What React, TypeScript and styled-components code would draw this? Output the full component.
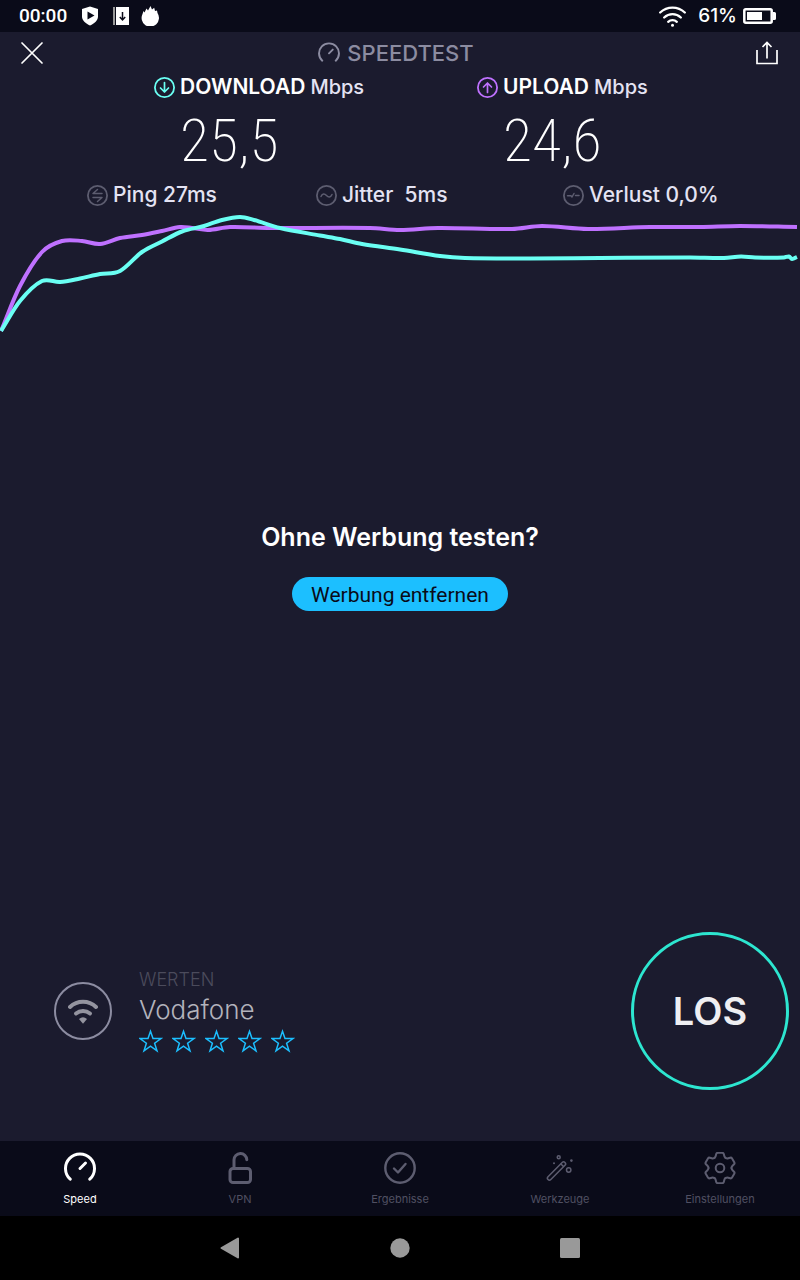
import React from "react";
import styled, { createGlobalStyle } from "styled-components";

const colors = {
  page: "#1b1b2e",
  bar: "#0a0b19",
  white: "#ffffff",
  soft: "#e4e3f3",
  muted: "#8c8ca1",
  dim: "#5d5d70",
  cyan: "#6afff3",
  purple: "#bf71ff",
  blue: "#1cbfff",
  ring: "#2de6d0",
};

const GlobalStyle = createGlobalStyle`
  *, *::before, *::after { box-sizing: border-box; }
  body {
    margin: 0;
    background: ${colors.page};
    color: ${colors.white};
    font-family: Inter, "Liberation Sans", sans-serif;
  }
  button { font: inherit; color: inherit; background: none; border: 0; padding: 0; cursor: pointer; }
  a { color: inherit; text-decoration: none; }
  svg { display: block; flex: none; }
  h1, h2, p, dl, dt, dd { margin: 0; font: inherit; }
`;

const Screen = styled.div`
  min-height: 100vh;
  display: flex;
  flex-direction: column;
`;

const StatusBar = styled.div`
  height: 32px;
  padding: 0 24px 0 19px;
  display: flex;
  align-items: center;
  justify-content: space-between;
  background: ${colors.bar};
`;

const StatusGroup = styled.div<{ $gap: number }>`
  display: flex;
  align-items: center;
  gap: ${(p) => p.$gap}px;
`;

const Clock = styled.span`
  font: 500 19px/32px Roboto, sans-serif;
`;

const BatteryLevel = styled.span`
  font-size: 19px;
  font-weight: 500;
  line-height: 32px;
  margin-left: 6px;
`;

const Header = styled.header`
  height: 42px;
  padding: 0 20px;
  display: flex;
  align-items: center;
  justify-content: space-between;
`;

const Brand = styled.h1`
  display: flex;
  align-items: center;
  gap: 7px;
  padding-right: 6px;
  color: ${colors.muted};
  font-size: 22px;
  font-weight: 500;
`;

const Main = styled.main`
  flex: 1;
  display: flex;
  flex-direction: column;
`;

const Results = styled.dl`
  display: grid;
  grid-template-columns: 1fr 1fr;
  padding-left: 154px;
`;

const ResultLabel = styled.dt`
  display: flex;
  align-items: center;
  gap: 5px;
  font-size: 21px;
  font-weight: 600;
  line-height: 26px;
`;

const Unit = styled.span`
  color: ${colors.soft};
  font-size: 20px;
  font-weight: 500;
`;

const ResultValue = styled.dd`
  padding-left: 26px;
  font-family: "Roboto Condensed", Roboto, sans-serif;
  font-size: 60px;
  font-weight: 200;
  line-height: 82px;
`;

const Stats = styled.ul`
  display: grid;
  grid-template-columns: 229fr 247fr 237fr;
  margin: 0;
  padding: 0 0 0 87px;
  list-style: none;
`;

const Stat = styled.li`
  display: flex;
  align-items: center;
  gap: 5px;
  color: ${colors.soft};
  font-size: 21px;
  font-weight: 500;
  line-height: 26px;
  white-space: pre;

  svg { color: ${colors.dim}; }
`;

const Chart = styled.svg`
  width: 100%;
  height: 132px;
`;

const Promo = styled.section`
  display: flex;
  flex-direction: column;
  align-items: center;
  gap: 24px;
  padding-top: 181px;
`;

const PromoTitle = styled.h2`
  font-size: 25px;
  font-weight: 600;
  line-height: 32px;
`;

const PromoButton = styled.button`
  height: 34px;
  padding: 2px 19px 0;
  border-radius: 17px;
  background: ${colors.blue};
  color: ${colors.bar};
  font: 400 21px/32px Roboto, sans-serif;
`;

const ServerRow = styled.section`
  margin-top: auto;
  padding: 0 11px 51px 54px;
  display: flex;
  align-items: center;
`;

const NetworkBadge = styled.div`
  width: 58px;
  height: 58px;
  border: 2px solid ${colors.muted};
  border-radius: 50%;
  display: grid;
  place-items: center;
  color: #94949f;
`;

const Provider = styled.div`
  flex: 1;
  padding-left: 27px;
`;

const RateLabel = styled.p`
  color: #4b4b5c;
  font-size: 18px;
  font-weight: 300;
  line-height: 22px;
`;

const ProviderName = styled.p`
  color: #b3b3bc;
  font-size: 26px;
  font-weight: 300;
  line-height: 38px;
`;

const Stars = styled.div`
  display: flex;
  gap: 9px;
  height: 24px;
  align-items: center;
  color: ${colors.blue};
`;

const StartButton = styled.button`
  width: 158px;
  height: 158px;
  border: 3px solid ${colors.ring};
  border-radius: 50%;
  color: #efeff2;
  font-size: 38px;
  font-weight: 600;
`;

const TabBar = styled.nav`
  display: grid;
  grid-template-columns: repeat(5, 1fr);
  height: 75px;
  padding-top: 11px;
  background: ${colors.bar};
`;

const Tab = styled.a<{ $active?: boolean }>`
  display: flex;
  flex-direction: column;
  align-items: center;
  gap: 7px;
  color: ${(p) => (p.$active ? colors.white : colors.dim)};
  font-size: 11px;
  line-height: 16px;
`;

const TabLabel = styled.span<{ $active?: boolean }>`
  color: ${(p) => (p.$active ? colors.white : "#505062")};
`;

const SystemNav = styled.div`
  height: 64px;
  display: flex;
  align-items: center;
  justify-content: center;
  gap: 130px;
  background: #000;
  color: #999;
`;

const SystemButton = styled.button`
  width: 40px;
  height: 40px;
  display: grid;
  place-items: center;
`;

const line = {
  fill: "none",
  stroke: "currentColor",
  strokeLinecap: "round" as const,
  strokeLinejoin: "round" as const,
};

const Gauge = ({ size, weight }: { size: number; weight: number }) => (
  <svg width={size} height={size} viewBox="0 0 32 32" {...line} strokeWidth={weight}>
    <path d="M6.2 27.2A14.5 14.5 0 1 1 25.8 27.2" />
    <path d="M16 16.5L21.5 11" />
  </svg>
);

const CircleIcon = ({ color, children, weight = 1.7 }: { color?: string; children: React.ReactNode; weight?: number }) => (
  <svg width="21" height="21" viewBox="0 0 21 21" {...line} stroke={color || "currentColor"} strokeWidth={weight}>
    <circle cx="10.5" cy="10.5" r="9.6" strokeWidth="1.8" />
    {children}
  </svg>
);

type Point = [number, number];

const uploadPoints: Point[] = [
  [1, 331], [20, 286], [42, 252], [62, 241], [82, 241], [100, 244], [120, 238], [142, 235],
  [162, 231], [180, 227], [192, 228], [208, 230], [230, 227], [270, 228], [370, 228],
  [400, 230], [438, 228], [512, 229], [542, 226], [588, 229], [650, 227], [700, 227],
  [740, 226], [797, 227],
];

const downloadPoints: Point[] = [
  [1, 331], [20, 301], [42, 281], [60, 282], [80, 278.5], [100, 274], [120, 271], [142, 252],
  [162, 241.5], [182, 231.5], [204, 226], [222, 220], [240, 217], [254, 220], [280, 228],
  [320, 235.5], [340, 239], [362, 244], [400, 249.5], [440, 256], [465, 258], [530, 258.5],
  [600, 258], [690, 257.5], [724, 258], [741, 256.5], [755, 257.5], [784, 257.5],
  [789, 256.5], [792, 259], [797, 257],
];

/* Smooth curve through the samples, with tangents taken from the neighbours. */
function smooth(points: Point[]): string {
  const last = points.length - 1;
  const slope = (i: number) => {
    const a = points[Math.max(0, i - 1)];
    const b = points[Math.min(last, i + 1)];
    return (b[1] - a[1]) / (b[0] - a[0]);
  };
  let d = `M${points[0][0]} ${points[0][1]}`;
  for (let i = 0; i < last; i++) {
    const [x0, y0] = points[i];
    const [x1, y1] = points[i + 1];
    const step = (x1 - x0) / 3;
    d += `C${x0 + step} ${y0 + slope(i) * step} ${x1 - step} ${y1 - slope(i + 1) * step} ${x1} ${y1}`;
  }
  return d;
}

const tooth =
  "M-5.75 -9.96C-4.9 -10.5 -4.5 -11.2 -4.3 -12L-3.8 -14Q-3.5 -15.2 -2.2 -15.2L2.2 -15.2Q3.5 -15.2 3.8 -14L4.3 -12C4.5 -11.2 4.9 -10.5 5.75 -9.96";

const Gear = () => (
  <svg width="32" height="32" viewBox="-16 -16 32 32" {...line} strokeWidth="2">
    {[0, 60, 120, 180, 240, 300].map((angle) => (
      <path key={angle} d={tooth} transform={`rotate(${angle})`} />
    ))}
    <circle r="4.3" />
  </svg>
);

const Lock = () => (
  <svg width="32" height="32" viewBox="0 0 32 32" {...line} strokeWidth="3">
    <rect x="6" y="16.5" width="20.5" height="14" rx="3" />
    <path d="M10 16V8a6.300 6.300 0 0 1 12.800 -.2" />
  </svg>
);

const Check = () => (
  <svg width="32" height="32" viewBox="0 0 32 32" {...line} strokeWidth="2.4">
    <circle cx="16" cy="16" r="14.7" />
    <path d="M10 16.5l4 4 7.5-8.5" />
  </svg>
);

const Wand = () => (
  <svg width="32" height="32" viewBox="0 0 32 32" {...line} strokeWidth="1.5">
    <rect x="-2" y="-12" width="4" height="24" rx="2" transform="translate(12.5 19) rotate(45)" />
    <path d="M17 12l2.500 2.500" />
    <circle cx="14.7" cy="5.2" r="1.5" />
    <circle cx="24.7" cy="18" r="2.2" />
    <circle cx="27.4" cy="8.6" r="1.3" fill="currentColor" stroke="none" />
    <circle cx="10" cy="11.2" r="1" fill="currentColor" stroke="none" />
  </svg>
);

const tabs = [
  { label: "Speed", icon: <Gauge size={32} weight={3} />, active: true },
  { label: "VPN", icon: <Lock /> },
  { label: "Ergebnisse", icon: <Check /> },
  { label: "Werkzeuge", icon: <Wand /> },
  { label: "Einstellungen", icon: <Gear /> },
];

export default function App() {
  return (
    <>
      <GlobalStyle />
      <Screen>
        <StatusBar>
          <StatusGroup $gap={12}>
            <Clock>00:00</Clock>
            <svg width="22" height="20" viewBox="0 0 22 20">
              <path d="M11 0.5L19 3v7.5c0 4-3.5 7-8 9-4.5-2-8-5-8-9V3z" fill="#fff" />
              <path d="M8.5 5.5v8l7-4z" fill={colors.bar} />
            </svg>
            <svg width="16" height="18" viewBox="0 0 16 18">
              <path d="M0 0h2v18H0z" fill="#999" />
              <path d="M3 0h13v18H3z" fill="#fff" />
              <path d="M9.5 5v7M6.8 10l2.7 3 2.7-3" fill="none" stroke={colors.bar} strokeWidth="1.5" />
            </svg>
            <svg width="19" height="20" viewBox="0 0 19 20">
              <path d="M2.5 5L3.5 6.5 5.5 2.5 7 4.5 9.5 0 11 3.5 13.2 1.8 14 5 16 4.5 16.5 7A8.7 8.7 0 1 1 1.5 8z" fill="#fff" />
            </svg>
          </StatusGroup>
          <StatusGroup $gap={6}>
            <svg width="27" height="21" viewBox="0 0 27 21" {...line} strokeWidth="2.3">
              <path d="M1.2 6.5a18 18 0 0 1 24.6 0M5.2 11.5a12 12 0 0 1 16.6 0M9.2 15.8a6.3 6.3 0 0 1 8.6 0" />
              <circle cx="13.5" cy="19.2" r="1.5" fill="currentColor" stroke="none" />
            </svg>
            <BatteryLevel>61%</BatteryLevel>
            <svg width="33" height="16" viewBox="0 0 33 16">
              <rect x="1.3" y="1.3" width="27.4" height="13.4" rx="1.5" fill="none" stroke="#fff" strokeWidth="2.5" />
              <path d="M4 4h15v8H4zM30 4h1.5q1.5 0 1.5 1.5v5q0 1.5-1.5 1.5H30z" fill="#fff" />
            </svg>
          </StatusGroup>
        </StatusBar>

        <Header>
          <button aria-label="Schließen">
            <svg width="24" height="24" viewBox="0 0 24 24" {...line} strokeWidth="1.7">
              <path d="M2 2l20 20M22 2L2 22" />
            </svg>
          </button>
          <Brand>
            <Gauge size={22} weight={2.8} />
            SPEEDTEST
          </Brand>
          <button aria-label="Teilen">
            <svg width="26" height="24" viewBox="0 0 26 24" {...line} strokeLinecap="butt" strokeLinejoin="miter" strokeWidth="1.7">
              <path d="M3 9v13.5h20V9M13 17.5V2M8.5 6L13 1.5 17.5 6" />
            </svg>
          </button>
        </Header>

        <Main>
          <Results>
            <div>
              <ResultLabel>
                <CircleIcon color={colors.cyan}>
                  <path d="M10.5 5.5v9.500M6.5 11l4 4 4-4" />
                </CircleIcon>
                <span>DOWNLOAD</span>
                <Unit>Mbps</Unit>
              </ResultLabel>
              <ResultValue>25,5</ResultValue>
            </div>
            <div>
              <ResultLabel>
                <CircleIcon color={colors.purple}>
                  <path d="M10.5 15.5V6M6.5 10l4-4 4 4" />
                </CircleIcon>
                <span>UPLOAD</span>
                <Unit>Mbps</Unit>
              </ResultLabel>
              <ResultValue>24,6</ResultValue>
            </div>
          </Results>

          <Stats>
            <Stat>
              <CircleIcon weight={1.5}>
                <path d="M15 8.500H6l4.500-4M6 12.500h9l-4.500 4" />
              </CircleIcon>
              Ping 27ms
            </Stat>
            <Stat>
              <CircleIcon weight={1.5}>
                <path d="M5 11.500c1.500-3.500 3.700-3 5.500-1s4 2.500 5.500-1" />
              </CircleIcon>
              {"Jitter  5ms"}
            </Stat>
            <Stat>
              <CircleIcon weight={1.5}>
                <path d="M4.500 10.800h3.500l1 1.200 2-3.500M12.500 10.500h3.500" />
              </CircleIcon>
              Verlust 0,0%
            </Stat>
          </Stats>

          <Chart viewBox="0 208 800 132" preserveAspectRatio="none" fill="none" strokeWidth="4" role="img" aria-label="Verlauf">
            <path d={smooth(uploadPoints)} stroke={colors.purple} />
            <path d={smooth(downloadPoints)} stroke={colors.cyan} />
          </Chart>

          <Promo>
            <PromoTitle>Ohne Werbung testen?</PromoTitle>
            <PromoButton>Werbung entfernen</PromoButton>
          </Promo>

          <ServerRow>
            <NetworkBadge>
              <svg width="30" height="25" viewBox="0 0 30 25" {...line} strokeWidth="4">
                <path d="M2 8a19 19 0 0 1 26 0" />
                <path d="M8 14.5a11 11 0 0 1 14 0" />
                <path d="M11 20q4-3.5 8 0l-4 4.7z" fill="currentColor" stroke="none" />
              </svg>
            </NetworkBadge>
            <Provider>
              <RateLabel>WERTEN</RateLabel>
              <ProviderName>Vodafone</ProviderName>
              <Stars>
                {[1, 2, 3, 4, 5].map((n) => (
                  <button key={n} aria-label={`${n} Sterne`}>
                    <svg width="24" height="24" viewBox="0 0 24 24" {...line} strokeLinejoin="miter" strokeWidth="1.5">
                      <path d="M11.5 2.3l2.500 7.200h8l-6.400 4.700 2.400 7.700-6.500-4.700-6.500 4.700 2.400-7.700L1 9.500h8z" />
                    </svg>
                  </button>
                ))}
              </Stars>
            </Provider>
            <StartButton>LOS</StartButton>
          </ServerRow>
        </Main>

        <TabBar>
          {tabs.map((tab) => (
            <Tab key={tab.label} href="#" $active={tab.active}>
              {tab.icon}
              <TabLabel $active={tab.active}>{tab.label}</TabLabel>
            </Tab>
          ))}
        </TabBar>

        <SystemNav>
          <SystemButton aria-label="Zurück">
            <svg width="20" height="22" viewBox="0 0 20 22">
              <path d="M18 1.5v19L1.5 11z" fill="currentColor" stroke="currentColor" strokeWidth="2" strokeLinejoin="round" />
            </svg>
          </SystemButton>
          <SystemButton aria-label="Startseite">
            <svg width="20" height="20" viewBox="0 0 20 20">
              <circle cx="10" cy="10" r="9.7" fill="currentColor" />
            </svg>
          </SystemButton>
          <SystemButton aria-label="Übersicht">
            <svg width="20" height="20" viewBox="0 0 20 20">
              <rect width="20" height="20" rx="1.5" fill="currentColor" />
            </svg>
          </SystemButton>
        </SystemNav>
      </Screen>
    </>
  );
}
